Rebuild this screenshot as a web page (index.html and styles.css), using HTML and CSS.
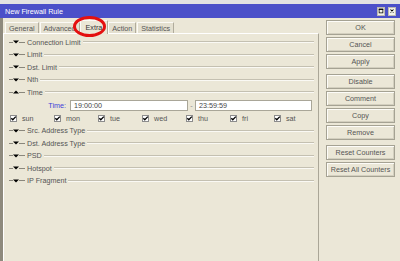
FILE: index.html
```html
<!DOCTYPE html>
<html>
<head>
<meta charset="utf-8">
<link rel="stylesheet" href="styles.css">
</head>
<body>
<div class="win">
  <div class="title">
    <span class="ttext">New Firewall Rule</span>
    <div class="tbtns">
      <span class="tb"><svg width="8" height="8" viewBox="0 0 8 8"><rect x="1.5" y="1.5" width="5" height="5" fill="none" stroke="#000" stroke-width="1"/><rect x="1" y="1" width="6" height="1.5" fill="#000"/></svg></span>
      <span class="tb"><svg width="8" height="8" viewBox="0 0 8 8"><path d="M2 2 L6 6 M6 2 L2 6" stroke="#000" stroke-width="1.4"/></svg></span>
    </div>
  </div>
  <div class="main">
    <div class="left">
      <div class="tabs">
        <span class="tab">General</span>
        <span class="tab">Advanced</span>
        <span class="tab sel">Extra</span>
        <span class="tab">Action</span>
        <span class="tab">Statistics</span>
      </div>
      <div class="panel">
        <div class="sec"><span class="d1"></span><svg class="tri" width="6" height="4" viewBox="0 0 6 4"><path d="M0 0.5 H6 L3 3.5 Z" fill="#000"/></svg><span class="d2"></span><span class="lbl">Connection Limit</span><span class="line"></span></div>
        <div class="sec"><span class="d1"></span><svg class="tri" width="6" height="4" viewBox="0 0 6 4"><path d="M0 0.5 H6 L3 3.5 Z" fill="#000"/></svg><span class="d2"></span><span class="lbl">Limit</span><span class="line"></span></div>
        <div class="sec"><span class="d1"></span><svg class="tri" width="6" height="4" viewBox="0 0 6 4"><path d="M0 0.5 H6 L3 3.5 Z" fill="#000"/></svg><span class="d2"></span><span class="lbl">Dst. Limit</span><span class="line"></span></div>
        <div class="sec"><span class="d1"></span><svg class="tri" width="6" height="4" viewBox="0 0 6 4"><path d="M0 0.5 H6 L3 3.5 Z" fill="#000"/></svg><span class="d2"></span><span class="lbl">Nth</span><span class="line"></span></div>
        <div class="sec"><span class="d1"></span><svg class="tri" width="6" height="4" viewBox="0 0 6 4"><path d="M0 3.5 H6 L3 0.5 Z" fill="#000"/></svg><span class="d2"></span><span class="lbl">Time</span><span class="line"></span></div>
        <div class="trow">
          <span class="tlabel">Time:</span>
          <span class="inp i1">19:00:00</span>
          <span class="sep">-</span>
          <span class="inp i2">23:59:59</span>
        </div>
        <div class="days">
          <span class="day"><span class="cb"><svg width="7" height="7" viewBox="0 0 7 7"><path d="M1.3 3.2 L2.8 4.8 L5.8 1.6" fill="none" stroke="#000" stroke-width="1.3"/></svg></span>sun</span>
          <span class="day"><span class="cb"><svg width="7" height="7" viewBox="0 0 7 7"><path d="M1.3 3.2 L2.8 4.8 L5.8 1.6" fill="none" stroke="#000" stroke-width="1.3"/></svg></span>mon</span>
          <span class="day"><span class="cb"><svg width="7" height="7" viewBox="0 0 7 7"><path d="M1.3 3.2 L2.8 4.8 L5.8 1.6" fill="none" stroke="#000" stroke-width="1.3"/></svg></span>tue</span>
          <span class="day"><span class="cb"><svg width="7" height="7" viewBox="0 0 7 7"><path d="M1.3 3.2 L2.8 4.8 L5.8 1.6" fill="none" stroke="#000" stroke-width="1.3"/></svg></span>wed</span>
          <span class="day"><span class="cb"><svg width="7" height="7" viewBox="0 0 7 7"><path d="M1.3 3.2 L2.8 4.8 L5.8 1.6" fill="none" stroke="#000" stroke-width="1.3"/></svg></span>thu</span>
          <span class="day"><span class="cb"><svg width="7" height="7" viewBox="0 0 7 7"><path d="M1.3 3.2 L2.8 4.8 L5.8 1.6" fill="none" stroke="#000" stroke-width="1.3"/></svg></span>fri</span>
          <span class="day"><span class="cb"><svg width="7" height="7" viewBox="0 0 7 7"><path d="M1.3 3.2 L2.8 4.8 L5.8 1.6" fill="none" stroke="#000" stroke-width="1.3"/></svg></span>sat</span>
        </div>
        <div class="sec"><span class="d1"></span><svg class="tri" width="6" height="4" viewBox="0 0 6 4"><path d="M0 0.5 H6 L3 3.5 Z" fill="#000"/></svg><span class="d2"></span><span class="lbl">Src. Address Type</span><span class="line"></span></div>
        <div class="sec"><span class="d1"></span><svg class="tri" width="6" height="4" viewBox="0 0 6 4"><path d="M0 0.5 H6 L3 3.5 Z" fill="#000"/></svg><span class="d2"></span><span class="lbl">Dst. Address Type</span><span class="line"></span></div>
        <div class="sec"><span class="d1"></span><svg class="tri" width="6" height="4" viewBox="0 0 6 4"><path d="M0 0.5 H6 L3 3.5 Z" fill="#000"/></svg><span class="d2"></span><span class="lbl">PSD</span><span class="line"></span></div>
        <div class="sec"><span class="d1"></span><svg class="tri" width="6" height="4" viewBox="0 0 6 4"><path d="M0 0.5 H6 L3 3.5 Z" fill="#000"/></svg><span class="d2"></span><span class="lbl">Hotspot</span><span class="line"></span></div>
        <div class="sec"><span class="d1"></span><svg class="tri" width="6" height="4" viewBox="0 0 6 4"><path d="M0 0.5 H6 L3 3.5 Z" fill="#000"/></svg><span class="d2"></span><span class="lbl">IP Fragment</span><span class="line"></span></div>
      </div>
    </div>
    <div class="right">
      <div class="grp">
        <span class="btn">OK</span>
        <span class="btn">Cancel</span>
        <span class="btn">Apply</span>
      </div>
      <div class="grp">
        <span class="btn">Disable</span>
        <span class="btn">Comment</span>
        <span class="btn">Copy</span>
        <span class="btn">Remove</span>
      </div>
      <div class="grp">
        <span class="btn">Reset Counters</span>
        <span class="btn">Reset All Counters</span>
      </div>
    </div>
  </div>
  <div class="mark"></div>
</div>
</body>
</html>
```
FILE: styles.css
```css
* { box-sizing: border-box; }
html, body { margin: 0; padding: 0; }
body {
  width: 400px;
  height: 261px;
  overflow: hidden;
  background: #ebe7d7;
  font-family: "Liberation Sans", Arial, sans-serif;
  font-size: 7.2px;
  color: #555;
  -webkit-font-smoothing: antialiased;
}
.win {
  position: relative;
  width: 400px;
  height: 261px;
  background: #ebe7d7;
}
.title {
  height: 18px;
  border-top: 4px solid #e2e2e2;
  background: #4b50c9;
  display: flex;
  align-items: center;
  justify-content: space-between;
  padding: 0 4px 0 5px;
  color: #fff;
}
.ttext { font-size: 7.2px; color: #fff; }
.tbtns { display: flex; gap: 3px; }
.tb {
  width: 8px;
  height: 9px;
  background: #f2f1ea;
  border: 1px solid #bdbab0;
  display: flex;
  align-items: center;
  justify-content: center;
}
.tb svg { display: block; }
.main {
  display: flex;
  height: 243px;
}
.left {
  width: 319px;
  border-left: 3px solid #8e8a7d;
  padding-top: 2px;
  display: flex;
  flex-direction: column;
}
.tabs {
  display: flex;
  align-items: flex-end;
  height: 13px;
  padding-left: 2px;
  gap: 1px;
}
.tab {
  height: 11px;
  padding: 0 3px;
  background: #e4e0d0;
  border-top: 1px solid #fbfaf6;
  border-left: 1px solid #fbfaf6;
  border-right: 1px solid #b0ac9c;
  display: flex;
  align-items: center;
  color: #555;
}
.tab.sel {
  height: 14px;
  margin: 0 -1px -1px -1px;
  padding: 0 5px;
  background: #ebe7d7;
  position: relative;
  z-index: 1;
  color: #333;
}
.panel {
  flex: 1;
  border-top: 1px solid #fff;
  border-left: 1px solid #fff;
  border-right: 1px solid #aaa697;
  padding-top: 2px;
}
.sec {
  height: 12.5px;
  display: flex;
  align-items: center;
  padding-left: 5px;
  padding-right: 4px;
}
.d1 { width: 4px; height: 1px; background: #8a877c; }
.d2 { width: 6px; height: 1px; background: #8a877c; }
.tri { display: block; }
.lbl { margin-left: 2px; color: #555; white-space: nowrap; }
.line {
  flex: 1;
  height: 2px;
  margin-left: 2px;
  border-top: 1px solid #c4c0b1;
  border-bottom: 1px solid #faf9f4;
}
.trow {
  height: 13px;
  display: flex;
  align-items: center;
}
.tlabel {
  width: 62px;
  text-align: right;
  color: #4040d8;
  margin-right: 4px;
}
.inp {
  height: 11px;
  background: #fff;
  border: 1px solid #a9a698;
  display: flex;
  align-items: center;
  padding-left: 3px;
  color: #444;
}
.i1 { width: 118px; }
.i2 { width: 117px; }
.sep { width: 7px; text-align: center; color: #888; }
.days {
  height: 13px;
  display: grid;
  grid-template-columns: repeat(7, 44px);
  align-items: center;
  padding-left: 6px;
}
.day { display: flex; align-items: center; color: #555; }
.cb {
  width: 7px;
  height: 7px;
  background: #fff;
  border: 1px solid #8c8c8c;
  margin-right: 5px;
  display: flex;
  align-items: center;
  justify-content: center;
}
.cb svg { display: block; flex: none; }
.right {
  flex: 1;
  padding: 2px 0 0 7px;
  display: flex;
  flex-direction: column;
  gap: 5px;
}
.grp { display: flex; flex-direction: column; gap: 2px; }
.btn {
  width: 69px;
  height: 15px;
  background: #ebe7d7;
  border: 1px solid #a5a293;
  box-shadow: inset 1px 1px 0 #fdfcf8, inset -1px -1px 0 #d3cfbf;
  display: flex;
  align-items: center;
  justify-content: center;
  color: #555;
  white-space: nowrap;
}
.mark {
  position: absolute;
  left: 73px;
  top: 16px;
  width: 33px;
  height: 21px;
  border: 3px solid #e41010;
  border-radius: 50%;
  z-index: 5;
}
```
